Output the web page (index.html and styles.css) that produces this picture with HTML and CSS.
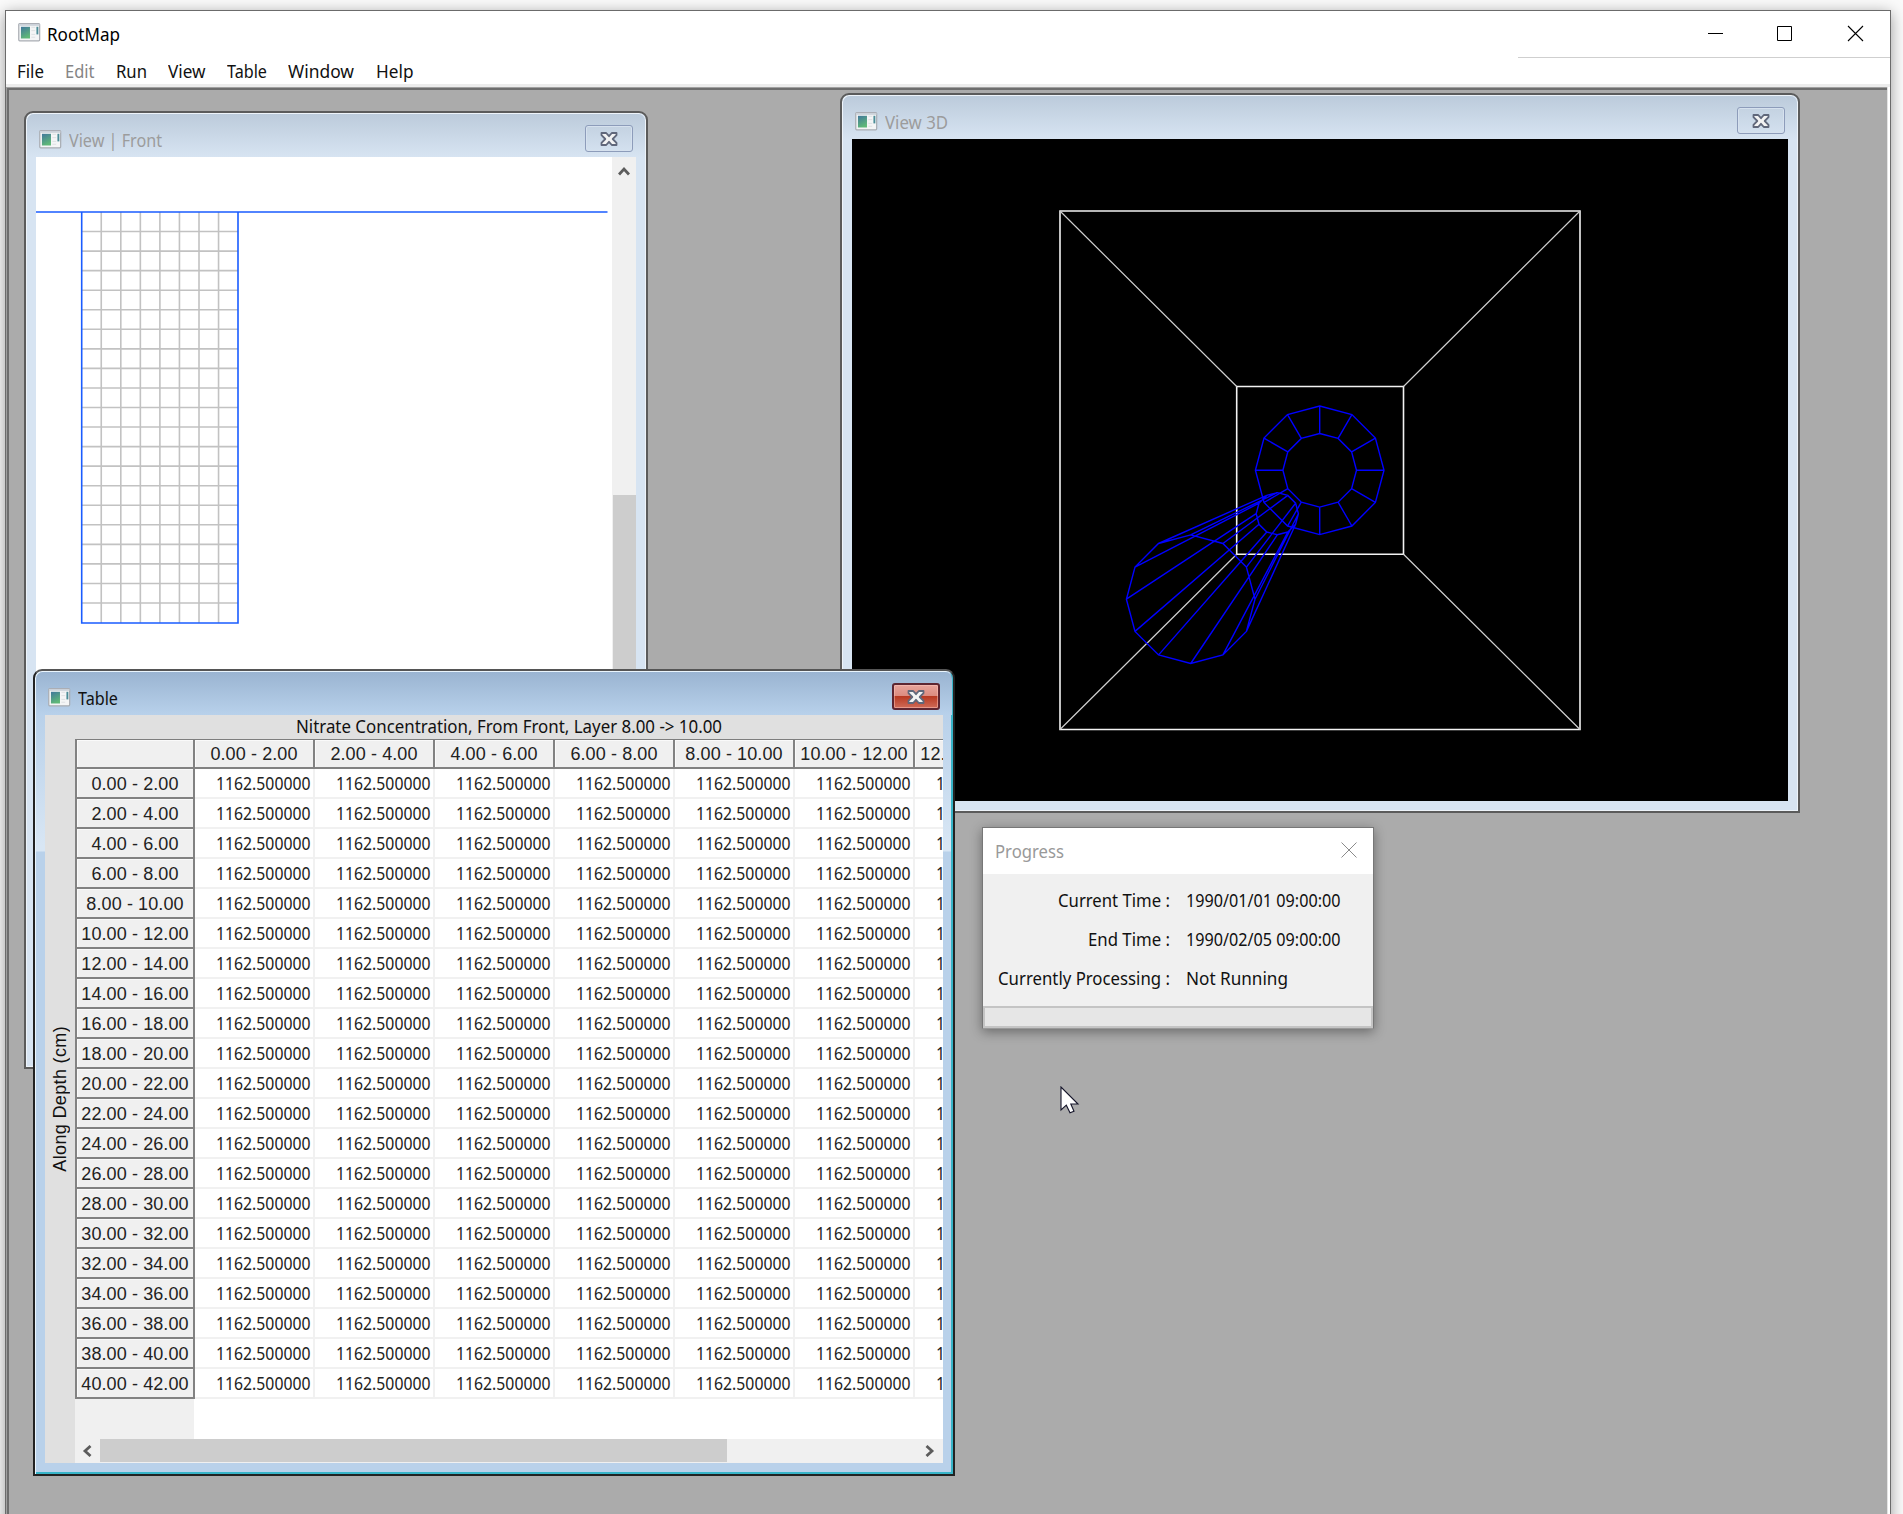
FILE: index.html
```
<!DOCTYPE html>
<html lang="en">
<head>
<meta charset="utf-8">
<title>RootMap</title>
<link rel="stylesheet" href="styles.css">
</head>
<body>
<svg width="0" height="0" class="defs">
  <defs>
    <linearGradient id="pane" x1="0" y1="0" x2="0.4" y2="1"><stop offset="0" stop-color="#41779c"/><stop offset="1" stop-color="#5fb878"/></linearGradient>
    <symbol id="app-icon" viewBox="0 0 24 20">
      <rect x="0.7" y="0.7" width="22" height="18" rx="1" fill="#f4f5f6" stroke="#a9adb3" stroke-width="1.3"/>
      <path d="M1 2H22.5" stroke="#ccd2da" stroke-width="2"/>
      <rect x="3" y="4" width="9.5" height="12.3" fill="url(#pane)"/>
      <path d="M14 4.500H18M14 8H18M14 12H18M14 15H18" stroke="#dcdfe1" stroke-width="1"/>
      <rect x="19.300" y="4" width="2" height="8" fill="#4c8d98"/>
    </symbol>
    <symbol id="close-glyph" viewBox="0 0 18 14">
      <path d="M1.500 1H6.200L9 4.200 11.800 1H16.500V3.200L12.700 7 16.500 10.800V13H11.800L9 9.800 6.200 13H1.500V10.800L5.300 7 1.500 3.200Z" fill="#f3f3f3" stroke="#60677a" stroke-width="1.800" stroke-linejoin="round"/>
    </symbol>
  </defs>
</svg>
<div class="main-window">
  <header class="titlebar">
    <svg class="app-icon"><use href="#app-icon"/></svg>
    <span class="fit caption" data-width="73">RootMap</span>
    <svg class="controls" width="160" height="20" fill="none" stroke="#000">
      <path d="M1 10.500H16M70.500 3.500H84.500V17.500H70.500Z"/>
      <path d="M141 3L156 18M156 3L141 18" stroke-width="1.100"/>
    </svg>
  </header>
  <nav class="menu">
    <span class="fit" data-width="27">File</span>
    <span class="fit disabled" data-width="29.500">Edit</span>
    <span class="fit" data-width="31">Run</span>
    <span class="fit" data-width="37.500">View</span>
    <span class="fit" data-width="40">Table</span>
    <span class="fit" data-width="66">Window</span>
    <span class="fit" data-width="37.500">Help</span>
  </nav>
  <main class="desktop">

    <section class="child front-window">
      <div class="child-title">
        <svg class="app-icon"><use href="#app-icon"/></svg>
        <span class="fit" data-width="93">View | Front</span>
        <span class="close"><svg width="18" height="14"><use href="#close-glyph"/></svg></span>
      </div>
      <div class="front-body">
        <svg class="front-canvas" width="576" height="520" id="front"></svg>
        <div class="vscroll">
          <svg width="12" height="10"><path d="M1 8.500L6 3L11 8.500" fill="none" stroke="#5c5c5c" stroke-width="2.800"/></svg>
          <div class="vthumb"></div>
        </div>
      </div>
    </section>

    <section class="child space-window">
      <div class="child-title">
        <svg class="app-icon"><use href="#app-icon"/></svg>
        <span class="fit" data-width="63">View 3D</span>
        <span class="close"><svg width="18" height="14"><use href="#close-glyph"/></svg></span>
      </div>
      <svg class="space-canvas" id="space" viewBox="852 139 936 662"></svg>
    </section>

    <section class="child table-window">
      <div class="child-title">
        <svg class="app-icon"><use href="#app-icon"/></svg>
        <span class="fit" data-width="40">Table</span>
        <span class="close"><svg width="18" height="14"><use href="#close-glyph"/></svg></span>
      </div>
      <div class="table-body">
        <div class="axis"><span>Along Depth (cm)</span></div>
        <div class="table-main">
          <div class="table-heading"><span class="fit" data-width="426">Nitrate Concentration, From Front, Layer 8.00 -&gt; 10.00</span></div>
          <div class="grid" id="grid"></div>
          <div class="hscroll">
            <svg width="10" height="12"><path d="M8.500 1L3 6L8.500 11" fill="none" stroke="#5c5c5c" stroke-width="2.800"/></svg>
            <div class="hthumb"></div>
            <svg class="right" width="10" height="12"><path d="M1.500 1L7 6L1.500 11" fill="none" stroke="#5c5c5c" stroke-width="2.800"/></svg>
          </div>
        </div>
      </div>
    </section>

    <section class="progress">
      <div class="progress-title">
        <span class="fit" data-width="69">Progress</span>
        <svg width="16" height="16" stroke="#8a8a8a"><path d="M0.500 0.500L15.500 15.500M15.500 0.500L0.500 15.500"/></svg>
      </div>
      <div class="progress-rows">
        <div class="label"><span class="fit" data-width="112">Current Time :</span></div><div><span class="fit" data-width="154.500">1990/01/01 09:00:00</span></div>
        <div class="label"><span class="fit" data-width="82">End Time :</span></div><div><span class="fit" data-width="154.500">1990/02/05 09:00:00</span></div>
        <div class="label"><span class="fit" data-width="172">Currently Processing :</span></div><div><span class="fit" data-width="102">Not Running</span></div>
      </div>
      <div class="bar"></div>
    </section>

    <svg class="pointer" width="20" height="29"><path d="M1 1V24L6.300 19.200L10 26.800L14 25.200L10.800 18H18Z" fill="#fff" stroke="#15152a" stroke-width="1.100"/></svg>
  </main>
</div>
<script src="app.js"></script>
</body>
</html>
```
FILE: styles.css
```
* { box-sizing: border-box; }
body {
  margin: 0;
  width: 1903px;
  height: 1514px;
  overflow: hidden;
  background: #fafafa;
  font: 18px/24px "Noto Sans", "Open Sans", sans-serif;
  color: #111;
}
.defs { position: absolute; }
.fit { display: inline-block; white-space: nowrap; text-align: left; transform-origin: 0 50%; }
.app-icon { width: 23px; height: 19px; flex: none; }

.main-window {
  margin: 10px 12px 0 5px;
  height: 1530px;
  display: flex;
  flex-direction: column;
  border: 1px solid #6b6b6b;
  background: #fff;
  box-shadow: 0 3px 14px rgba(0, 0, 0, .38);
}
.titlebar { height: 46px; display: flex; align-items: flex-start; padding: 11px 23px 0 12px; }
.titlebar .app-icon { margin: 1px 6px 0 0; }
.titlebar .fit { color: #000; }
.titlebar .controls { margin: 1px 0 0 auto; }
.menu {
  position: relative;
  height: 30px;
  display: flex;
  gap: 21.3px;
  padding: 2px 0 0 11px;
  border-bottom: 3px solid #ececec;
}
.menu::before {
  content: "";
  position: absolute;
  top: 0;
  right: 0;
  width: 372px;
  height: 1px;
  background: #cfcfcf;
}
.menu .disabled { color: #858585; }

.desktop {
  position: relative;
  flex: 1;
  margin-right: 3px;
  background: #ababab;
  box-shadow: inset 1px 1px #a0a0a0, inset 3px 3px #6d6d6d, 1px 0 #e3e3e3;
}
.child {
  position: absolute;
  border: 2px solid #5b5b5b;
  border-radius: 9px 9px 0 0;
  background: #d7e4f2;
  box-shadow: inset 1px 1px #eef4fa, inset -1px -1px #eef4fa;
  padding: 0 9px 9px;
}
.child-title {
  display: flex;
  align-items: flex-start;
  margin: 1px -8px 0;
  border-radius: 7px 7px 0 0;
  background: linear-gradient(#bccbdb, #d7e4f2);
  color: #9c9c9c;
}
.child-title .app-icon { margin: 16px 7px 0 12px; }
.child-title .fit { margin-top: 14px; }
.close {
  margin: 11px 12px 0 auto;
  width: 48px;
  height: 27px;
  border: 1px solid #8d9cba;
  border-radius: 3px;
  box-shadow: inset 0 0 0 1px #d6e1ee;
  display: flex;
  align-items: center;
  justify-content: center;
}

.front-window { left: 18px; top: 24px; width: 624px; height: 958px; }
.front-window .child-title { height: 43px; }
.front-body { display: flex; margin-left: 1px; width: 600px; height: 903px; background: #fff; }
.front-canvas { flex: none; }
.vscroll { width: 24px; background: #f0f0f0; padding-top: 9px; display: flex; flex-direction: column; align-items: center; gap: 319px; }
.vscroll svg { flex: none; }
.vthumb { width: 23px; flex: 1; background: #cdcdcd; }

.space-window { left: 834px; top: 6px; width: 960px; height: 720px; }
.space-window .child-title { height: 43px; }
.space-canvas { display: block; width: 936px; height: 662px; margin-left: 1px; background: #000; }

.table-window {
  left: 27px;
  top: 582px;
  width: 922px;
  height: 807px;
  border-color: #222;
  border-top-color: #555;
  padding: 0 10px 11px;
  background:
    linear-gradient(#b9d1ea 0, #b9d1ea 45px, #d8e6f4 175px, #d8e6f4 180px, #b9d1ea 181px);
  box-shadow: inset 1px 1px #eaf5fd, inset -2px -2px #37b4c8;
}
.table-window .child-title { height: 43px; margin: 1px -9px 0; background: linear-gradient(#9ab4d1, #b8d1eb); color: #111; }
.table-window .close {
  border: 2px solid #5e2631;
  background: linear-gradient(#e8a49b 0, #dc8c80 46%, #b93a22 50%, #cf6b58 100%);
  box-shadow: inset 0 0 0 1px rgba(255, 200, 190, .5);
}
.table-body { display: flex; width: 898px; height: 748px; background: #e0e0e0; overflow: hidden; }
.axis { width: 30px; flex: none; display: flex; align-items: center; justify-content: center; padding-top: 20px; }
.axis span { writing-mode: vertical-rl; transform: rotate(180deg); font: 18px/24px "Liberation Sans", sans-serif; letter-spacing: .35px; white-space: nowrap; }
.table-main { width: 868px; display: flex; flex-direction: column; overflow: hidden; }
.table-heading { height: 24px; flex: none; line-height: 22px; padding-left: 221px; }
.grid {
  width: 960px;
  height: 700px;
  flex: 1;
  display: grid;
  grid-template-columns: 120px repeat(7, 120px);
  grid-template-rows: 29px;
  grid-auto-rows: 30px;
  background: linear-gradient(90deg, #f0f0f0 119px, #fff 119px);
  border-top: 1px solid #7e7e7e;
}
.head {
  background: #f0f0f0;
  border-right: 2px solid #828282;
  border-bottom: 2px solid #828282;
  box-shadow: inset 1px 1px #fafafa;
  font: 18px/28px "Liberation Sans", sans-serif;
  letter-spacing: .1px;
  text-align: center;
  white-space: nowrap;
  overflow: hidden;
  color: #222;
}
.head.first { border-left: 2px solid #828282; }
.row-head { line-height: 30px; }
.cell { border-right: 2px solid #f1f1f1; border-bottom: 2px solid #f1f1f1; line-height: 29px; text-align: right; padding-right: 3px; color: #222; overflow: hidden; }
.hscroll { height: 24px; flex: none; background: #f0f0f0; display: flex; align-items: center; padding: 0 8px 1px 7px; }
.hscroll svg { flex: none; }
.hthumb { width: 627px; height: 23px; margin-left: 8px; background: #cdcdcd; }
.hscroll .right { margin-left: auto; }

.progress {
  position: absolute;
  left: 976px;
  top: 740px;
  width: 392px;
  height: 202px;
  border: 1px solid #777;
  border-bottom-color: #999;
  background: #f0f0f0;
  box-shadow: 0 3px 11px rgba(0, 0, 0, .38);
}
.progress-title { height: 46px; background: #fff; color: #999; display: flex; justify-content: space-between; padding: 11px 16px 0 12px; }
.progress-title svg { margin-top: 3px; }
.progress-rows { display: grid; grid-template-columns: 187px 1fr; column-gap: 16px; grid-auto-rows: 39px; line-height: 24px; padding-top: 14px; height: 132px; }
.label { text-align: right; }
.bar { height: 22px; background: #e6e6e6; border: 2px solid #c4c4c4; }
.pointer { position: absolute; left: 1054px; top: 999px; }
```
FILE: app.js
```
const NS = "http://www.w3.org/2000/svg";

function path(parent, d, stroke, width) {
  const p = document.createElementNS(NS, "path");
  p.setAttribute("d", d);
  p.setAttribute("fill", "none");
  p.setAttribute("stroke", stroke);
  p.setAttribute("stroke-width", width);
  parent.appendChild(p);
}

// Front view: soil surface and voxel grid
const front = document.getElementById("front");
let lines = "";
for (let i = 1; i < 8; i++) lines += `M${45.7 + i * 19.55} 55V466`;
for (let j = 1; j < 21; j++) lines += `M46 ${55 + j * 19.55}H202`;
path(front, lines, "#c2c2c2", 1.6);
path(front, "M0 55H571.500M45.700 55V466H202V55", "#1a5cff", 1.6);

// 3D view: container box, ring and root cone
const space = document.getElementById("space");
path(space, "M1060 211H1580V729.500H1060ZM1236.700 386.500H1403.500V554.300H1236.700Z", "#f2f2f2", 1.6);
path(space, "M1060 211L1236.700 386.500M1580 211L1403.500 386.500M1580 729.500L1403.500 554.300M1060 729.500L1236.700 554.300", "#cfcfcf", 1.2);
const ring = (cx, cy, r) => Array.from({ length: 12 }, (_, i) => {
  const a = i * Math.PI / 6;
  return [(cx + r * Math.sin(a)).toFixed(1), (cy - r * Math.cos(a)).toFixed(1)];
});
function tube(a, b) {
  path(space, `M${a.join("L")}ZM${b.join("L")}Z` + a.map((p, i) => `M${p}L${b[i]}`).join(""), "#0000ff", 1.4);
}
tube(ring(1319.7, 470.3, 64.3), ring(1319.7, 470.3, 36.8));
tube(ring(1190.7, 599.2, 64.3), ring(1277.3, 513.7, 21.1));

// Concentration table
const range = i => `${(i * 2).toFixed(2)} - ${(i * 2 + 2).toFixed(2)}`;
let html = '<div class="head first"></div>';
for (let c = 0; c < 7; c++) html += `<div class="head">${range(c)}</div>`;
for (let r = 0; r < 21; r++) {
  html += `<div class="head first row-head">${range(r)}</div>`;
  for (let c = 0; c < 7; c++) html += '<div class="cell"><span class="fit" data-width="94.5">1162.500000</span></div>';
}
document.getElementById("grid").innerHTML = html;

const labels = [...document.querySelectorAll(".fit")];
const widths = labels.map(el => el.getBoundingClientRect().width);
labels.forEach((el, i) => {
  const w = Number(el.dataset.width);
  el.style.width = w + "px";
  el.style.transform = `scaleX(${w / widths[i]})`;
});
```
